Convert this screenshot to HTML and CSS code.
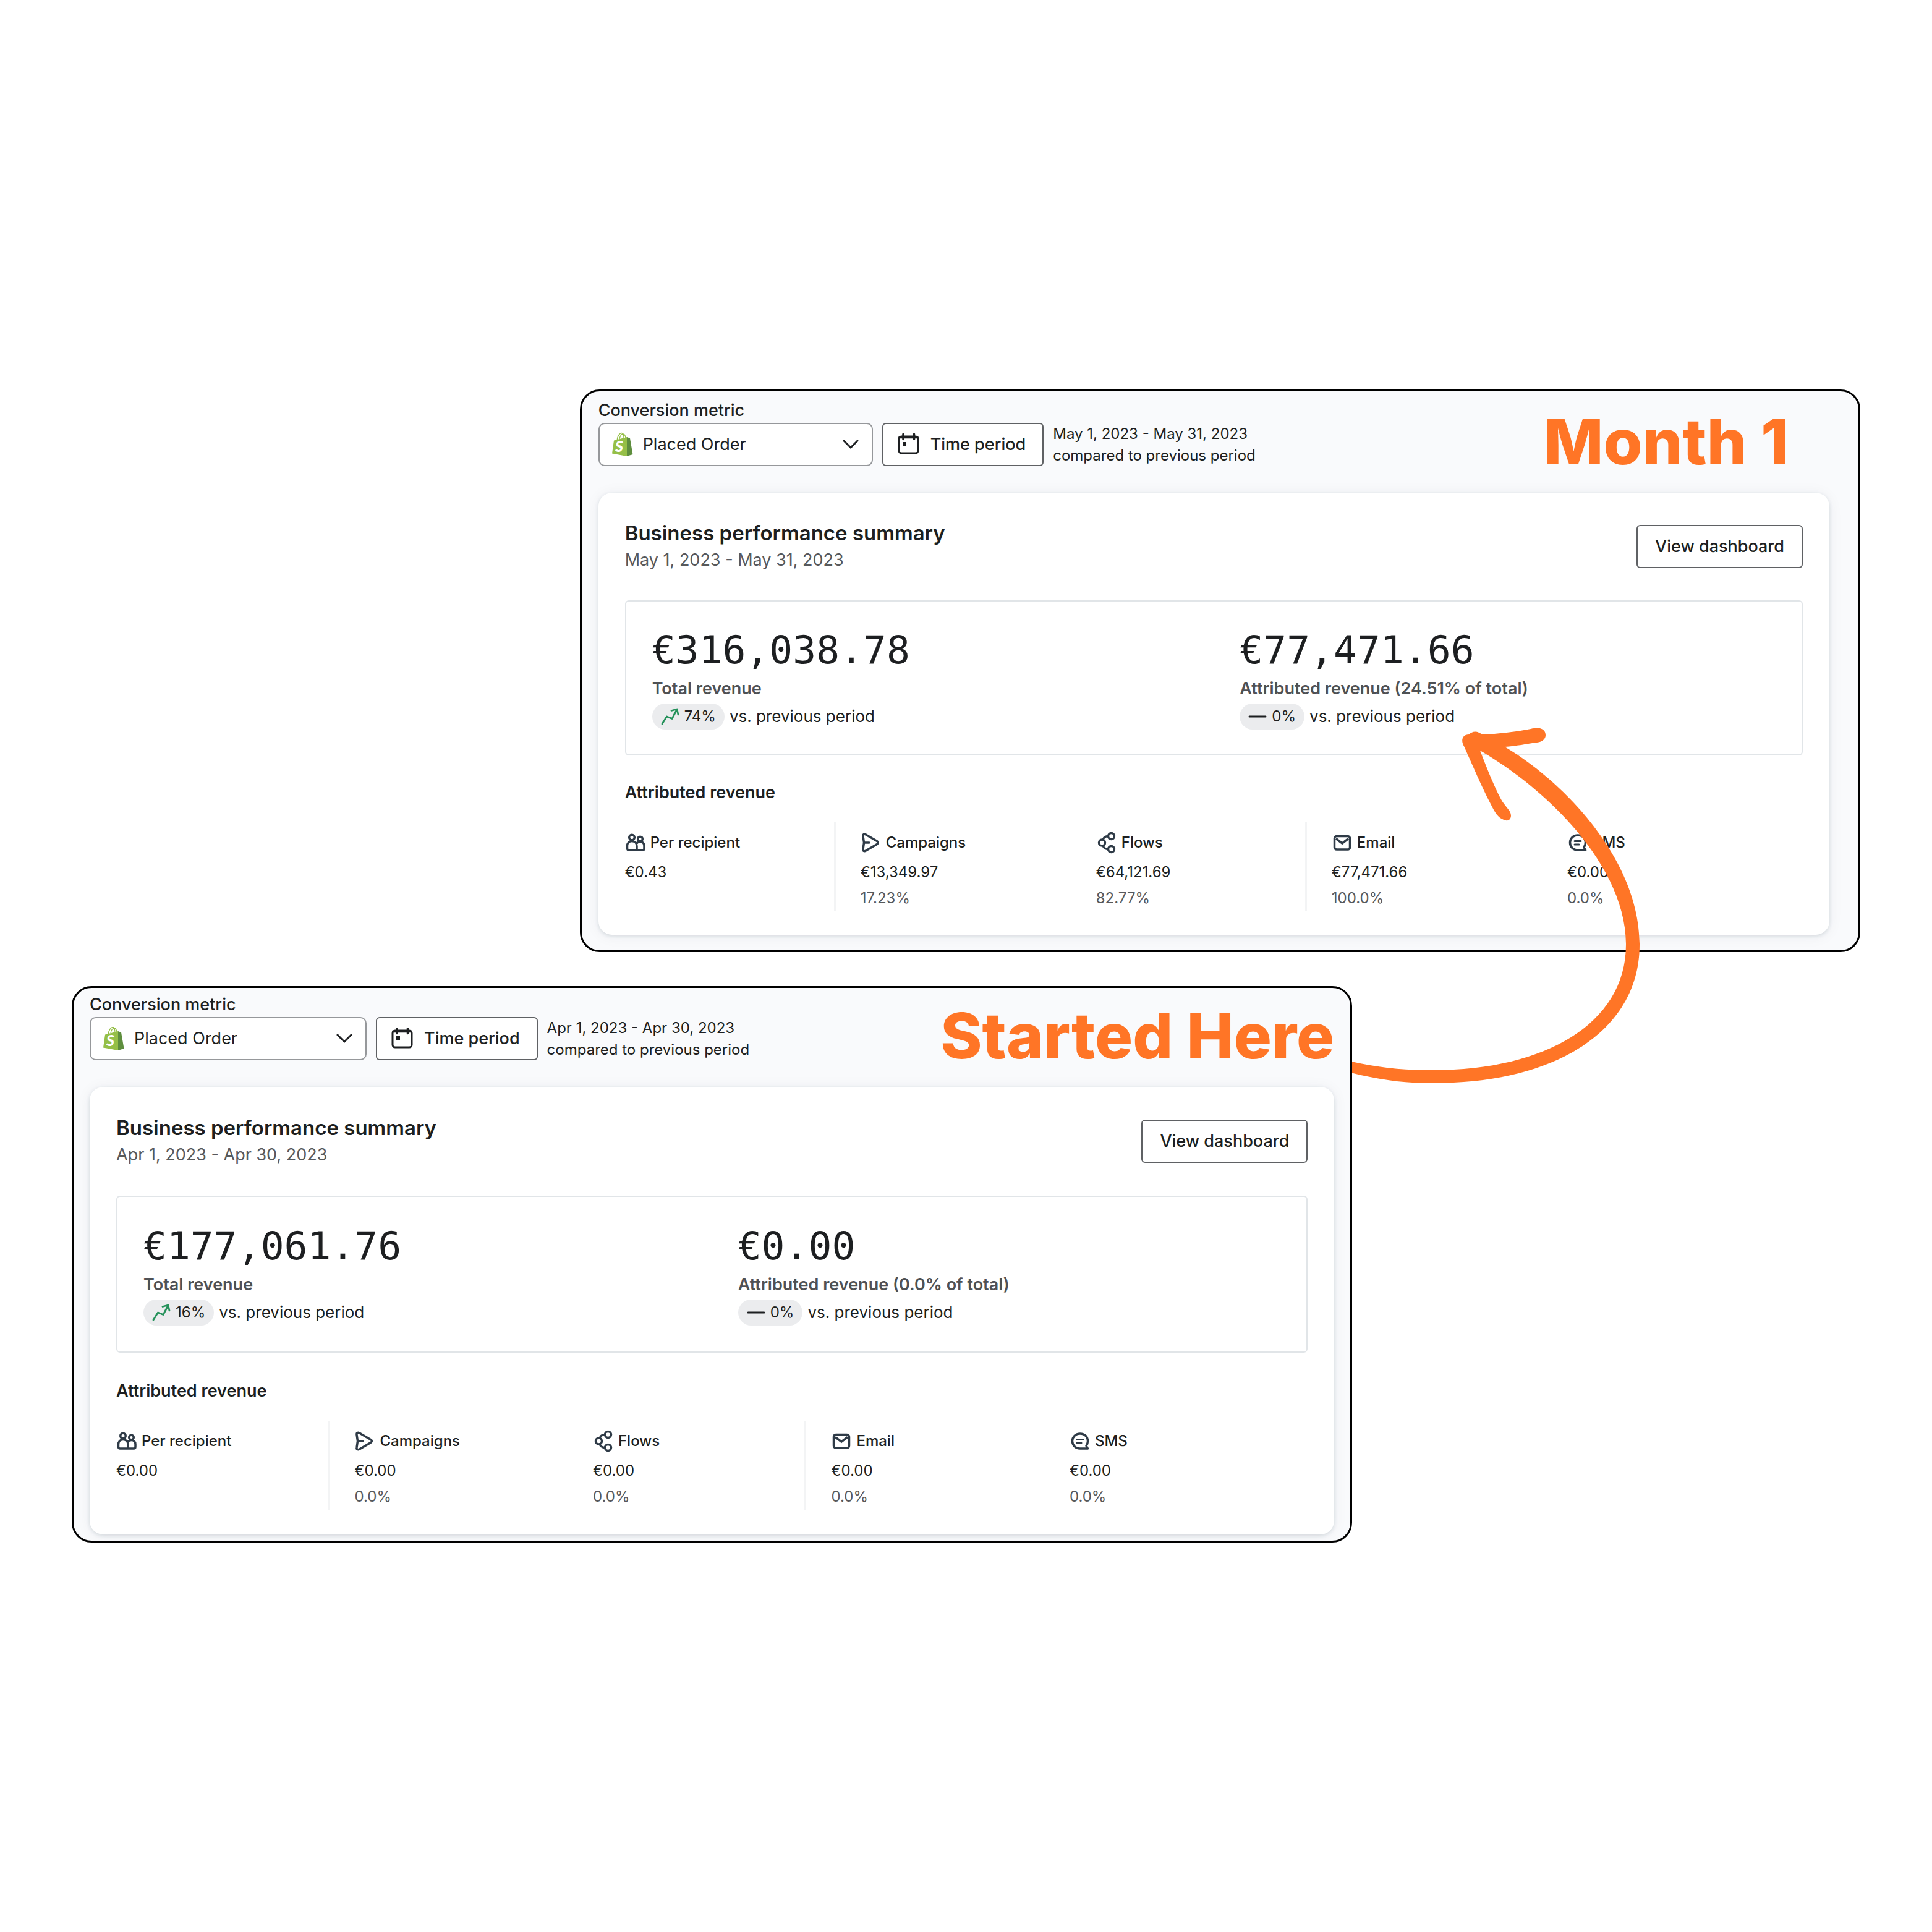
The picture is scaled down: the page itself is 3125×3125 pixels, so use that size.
FILE: index.html
```html
<!DOCTYPE html>
<html lang="en">
<head>
    <meta charset="UTF-8">
    <meta name="viewport" content="width=device-width, initial-scale=1.0">
    <title>Revenue: Started Here vs. Month 1</title>
    <link rel="stylesheet" href="styles.css">
</head>
<body>
    <!-- Shared icons -->
    <svg class="sprite" aria-hidden="true">
        <symbol id="i-bag" viewBox="0 0 34 40">
            <path d="M8 13c1-8 5-11.500 7.500-11.500 2 0 3.500 3 3.500 9M12 11c1-5 3.500-8 6-8s3.500 3 4 6.500" fill="none" stroke="#95bf47" stroke-width="1.300"/>
            <path d="M3 13.500l21-5.500V39L0 34.500z" fill="#95bf47"/>
            <path d="M24 8l5 2 4.500 26L24 39z" fill="#5e8e3e"/>
            <text x="5" y="32" font-family="Lato" font-size="25" font-weight="900" font-style="italic" fill="#fff">S</text>
        </symbol>
        <symbol id="i-calendar" viewBox="0 0 36 36">
            <rect x="2" y="5" width="31" height="27" rx="4" fill="none" stroke="currentColor" stroke-width="3"/>
            <path d="M1.500 6.500h32" stroke="currentColor" stroke-width="3.500"/>
            <path d="M9 1.500v8M26.500 1.500v8" stroke="currentColor" stroke-width="3.500" stroke-linecap="round"/>
            <rect x="8" y="14" width="6" height="6" fill="currentColor"/>
        </symbol>
        <symbol id="i-chevron" viewBox="0 0 26 16">
            <path d="M2 2l11 11L24 2" fill="none" stroke="currentColor" stroke-width="3" stroke-linecap="round"/>
        </symbol>
        <symbol id="i-trend" viewBox="0 0 30 28">
            <path d="M2 26l7.500-12 8.500 3.500L26 2.500M17 4.500l9-2.500 2 9" fill="none" stroke="#24915a" stroke-width="2.800" stroke-linecap="round" stroke-linejoin="round"/>
        </symbol>
        <symbol id="i-flat" viewBox="0 0 30 28">
            <path d="M2 14h26" stroke="currentColor" stroke-width="3" stroke-linecap="round"/>
        </symbol>
        <symbol id="i-people" viewBox="0 0 34 36">
            <g fill="none" stroke="currentColor" stroke-width="3.500" stroke-linejoin="round">
                <circle cx="11" cy="9.500" r="4.300"/>
                <circle cx="24.500" cy="12" r="3.800"/>
                <path d="M19 30H6Q3.500 30 3.500 27v-3.500c0-5 3-8 7.500-8s8 3 8 8zM19 30h9.500q2.500 0 2.500-2.500V23c0-4-2.500-6.500-6.500-6.500-2.500 0-4.500 1-6 3"/>
            </g>
        </symbol>
        <symbol id="i-send" viewBox="0 0 34 36">
            <path d="M5 14.500L4 7.500C3.500 4.500 6 3.500 8.500 5l18 10.500c2.500 1.500 2.500 3.500 0 5L8.500 31C6 32.500 3.500 31.500 4 28.500L5.500 18zM5.500 18H14" fill="none" stroke="currentColor" stroke-width="3.500" stroke-linecap="round" stroke-linejoin="round"/>
        </symbol>
        <symbol id="i-flow" viewBox="0 0 34 36">
            <g fill="none" stroke="currentColor" stroke-width="3.500">
                <circle cx="9.500" cy="18" r="5"/>
                <circle cx="24.500" cy="7.500" r="5"/>
                <circle cx="24.500" cy="28.500" r="5"/>
                <path d="M11 13Q13 7.500 19.500 7.500M11 23Q13 28.500 19.500 28.500"/>
            </g>
        </symbol>
        <symbol id="i-mail" viewBox="0 0 34 36">
            <rect x="4.500" y="7.500" width="25" height="21.500" rx="3.500" fill="none" stroke="currentColor" stroke-width="3.500"/>
            <path d="M7 11.500l10 7.500 10-7.500" fill="none" stroke="currentColor" stroke-width="3.500"/>
        </symbol>
        <symbol id="i-chat" viewBox="0 0 34 36">
            <path d="M29.500 30H17C9.500 30 4.500 24.500 4.500 18S9.500 6 17 6s12.500 5 12.500 12c0 3-1 5.500-2.500 7.500z" fill="none" stroke="currentColor" stroke-width="3.500" stroke-linejoin="round"/>
            <path d="M12 15.500h10M12 21h7" stroke="currentColor" stroke-width="3" stroke-linecap="round"/>
        </symbol>
    </svg>

    <main class="board">
        <section class="panel panel-after">
            <header class="toolbar">
                <div class="field">
                    <label for="metric-may">Conversion metric</label>
                    <div class="select">
                        <svg class="select-logo"><use href="#i-bag"/></svg>
                        <select id="metric-may"><option>Placed Order</option></select>
                        <svg class="select-arrow"><use href="#i-chevron"/></svg>
                    </div>
                </div>
                <button class="btn btn-period" type="button"><svg><use href="#i-calendar"/></svg>Time period</button>
                <p class="range">May 1, 2023 - May 31, 2023<br>compared to previous period</p>
                <h1>Month 1</h1>
            </header>
            <div class="card">
                <div class="card-head">
                    <div>
                        <h2>Business performance summary</h2>
                        <p class="dates">May 1, 2023 - May 31, 2023</p>
                    </div>
                    <button class="btn" type="button">View dashboard</button>
                </div>
                <div class="totals">
                    <div class="total">
                        <p class="amount">€316,038.78</p>
                        <p class="name">Total revenue</p>
                        <p class="change"><span class="chip"><svg><use href="#i-trend"/></svg>74%</span>vs. previous period</p>
                    </div>
                    <div class="total">
                        <p class="amount">€77,471.66</p>
                        <p class="name">Attributed revenue (24.51% of total)</p>
                        <p class="change"><span class="chip"><svg><use href="#i-flat"/></svg>0%</span>vs. previous period</p>
                    </div>
                </div>
                <h3>Attributed revenue</h3>
                <div class="channels">
                    <div class="channel divided">
                        <h4><svg><use href="#i-people"/></svg>Per recipient</h4>
                        <p>€0.43</p>
                    </div>
                    <div class="channel">
                        <h4><svg><use href="#i-send"/></svg>Campaigns</h4>
                        <p>€13,349.97</p>
                        <p class="share">17.23%</p>
                    </div>
                    <div class="channel divided">
                        <h4><svg><use href="#i-flow"/></svg>Flows</h4>
                        <p>€64,121.69</p>
                        <p class="share">82.77%</p>
                    </div>
                    <div class="channel">
                        <h4><svg><use href="#i-mail"/></svg>Email</h4>
                        <p>€77,471.66</p>
                        <p class="share">100.0%</p>
                    </div>
                    <div class="channel">
                        <h4><svg><use href="#i-chat"/></svg>SMS</h4>
                        <p>€0.00</p>
                        <p class="share">0.0%</p>
                    </div>
                </div>
            </div>
        </section>

        <section class="panel panel-before">
            <header class="toolbar">
                <div class="field">
                    <label for="metric-apr">Conversion metric</label>
                    <div class="select">
                        <svg class="select-logo"><use href="#i-bag"/></svg>
                        <select id="metric-apr"><option>Placed Order</option></select>
                        <svg class="select-arrow"><use href="#i-chevron"/></svg>
                    </div>
                </div>
                <button class="btn btn-period" type="button"><svg><use href="#i-calendar"/></svg>Time period</button>
                <p class="range">Apr 1, 2023 - Apr 30, 2023<br>compared to previous period</p>
                <h1>Started Here</h1>
            </header>
            <div class="card">
                <div class="card-head">
                    <div>
                        <h2>Business performance summary</h2>
                        <p class="dates">Apr 1, 2023 - Apr 30, 2023</p>
                    </div>
                    <button class="btn" type="button">View dashboard</button>
                </div>
                <div class="totals">
                    <div class="total">
                        <p class="amount">€177,061.76</p>
                        <p class="name">Total revenue</p>
                        <p class="change"><span class="chip"><svg><use href="#i-trend"/></svg>16%</span>vs. previous period</p>
                    </div>
                    <div class="total">
                        <p class="amount">€0.00</p>
                        <p class="name">Attributed revenue (0.0% of total)</p>
                        <p class="change"><span class="chip"><svg><use href="#i-flat"/></svg>0%</span>vs. previous period</p>
                    </div>
                </div>
                <h3>Attributed revenue</h3>
                <div class="channels">
                    <div class="channel divided">
                        <h4><svg><use href="#i-people"/></svg>Per recipient</h4>
                        <p>€0.00</p>
                    </div>
                    <div class="channel">
                        <h4><svg><use href="#i-send"/></svg>Campaigns</h4>
                        <p>€0.00</p>
                        <p class="share">0.0%</p>
                    </div>
                    <div class="channel divided">
                        <h4><svg><use href="#i-flow"/></svg>Flows</h4>
                        <p>€0.00</p>
                        <p class="share">0.0%</p>
                    </div>
                    <div class="channel">
                        <h4><svg><use href="#i-mail"/></svg>Email</h4>
                        <p>€0.00</p>
                        <p class="share">0.0%</p>
                    </div>
                    <div class="channel">
                        <h4><svg><use href="#i-chat"/></svg>SMS</h4>
                        <p>€0.00</p>
                        <p class="share">0.0%</p>
                    </div>
                </div>
            </div>
        </section>

        <!-- Hand-drawn arrow from April up to May -->
        <svg class="arrow" viewBox="0 0 3125 3125" aria-hidden="true">
            <path d="M2434 1208C2520 1258 2652 1385 2652 1528C2652 1665 2520 1752 2318 1752C2268 1752 2224 1746 2170 1731V1713C2224 1727 2268 1731 2318 1731C2500 1731 2630 1655 2630 1528C2630 1400 2500 1275 2394 1214C2404 1240 2418 1275 2428 1293C2434 1304 2444 1311 2444 1319C2444 1325 2440 1328 2436 1327C2426 1325 2420 1318 2414 1306C2396 1272 2382 1238 2368 1207C2362 1197 2366 1188 2376 1188C2382 1182 2390 1182 2397 1188C2424 1187 2450 1184 2476 1179C2490 1175 2500 1179 2500 1189C2500 1196 2494 1200 2486 1201C2470 1203 2452 1207 2434 1208Z"/>
        </svg>
    </main>
</body>
</html>
```
FILE: styles.css
```css
* {
    box-sizing: border-box;
}
body {
    margin: 0;
    background-color: #fff;
    color: #1d1f21;
    font-family: Inter, "Liberation Sans", sans-serif;
    font-size: 27px;
    line-height: 44px;
}
h1, h2, h3, h4, p {
    margin: 0;
}
.sprite {
    display: none;
}
.board {
    position: relative;
    display: flex;
    flex-direction: column;
    justify-content: center;
    gap: 55px;
    min-height: 100vh;
    padding: 0 116px;
}
.panel {
    width: 71.6%;
    border: 3px solid #000;
    border-radius: 32px;
    background-color: #f9fafc;
}
.panel-after {
    --space: 43px;
    --gap: 38px;
    align-self: flex-end;
    padding: 14px 47px 25px 27px;
}
.panel-before {
    --space: 44px;
    --gap: 40px;
    position: relative;
    z-index: 2;
    padding: 10px 26px 10px 26px;
}
.arrow {
    position: absolute;
    inset: 0;
    z-index: 1;
    width: 100%;
    height: 100%;
    fill: #ff7526;
    pointer-events: none;
}

/* Toolbar */
.toolbar {
    display: flex;
    align-items: flex-end;
    gap: 15px;
    margin-bottom: 43px;
}
.field label {
    display: block;
    margin-bottom: 3px;
    font-weight: 500;
    line-height: 34px;
}
.select {
    position: relative;
    width: 444px;
}
.panel-before .select {
    width: 448px;
}
.select select {
    display: block;
    width: 100%;
    height: 70px;
    padding: 0 70px;
    border: 2px solid #96989b;
    border-radius: 10px;
    background-color: #fff;
    color: inherit;
    font: inherit;
    appearance: none;
}
.select-logo {
    position: absolute;
    left: 22px;
    top: 15px;
    width: 34px;
    height: 40px;
}
.select-arrow {
    position: absolute;
    right: 23px;
    top: 27px;
    width: 26px;
    height: 16px;
    pointer-events: none;
}
.btn {
    display: flex;
    align-items: center;
    height: 70px;
    padding: 0 28px;
    border: 2px solid #5f6164;
    border-radius: 6px;
    background-color: #fff;
    color: inherit;
    font: inherit;
    font-weight: 500;
    white-space: nowrap;
}
.btn-period {
    gap: 17px;
    padding: 0 27px 0 23px;
}
.btn-period svg {
    width: 36px;
    height: 36px;
}
.range {
    font-size: 24px;
    line-height: 35px;
    white-space: nowrap;
}
.toolbar h1 {
    margin-left: auto;
    color: #ff7526;
    font-size: 102px;
    font-weight: 800;
    line-height: 80px;
    white-space: nowrap;
}
.panel-after h1 {
    padding-right: 66px;
}

/* Summary card */
.card {
    padding: var(--space) 43px var(--gap);
    border-radius: 22px;
    background-color: #fff;
    box-shadow: 0 2px 6px rgba(30, 50, 70, 0.14), 0 2px 24px rgba(30, 50, 70, 0.06);
}
.card-head {
    display: flex;
    align-items: center;
    justify-content: space-between;
    margin-bottom: var(--space);
}
h2 {
    font-size: 33px;
    font-weight: 600;
    line-height: 44px;
}
.dates {
    color: #57595c;
}
.totals {
    display: grid;
    grid-template-columns: 1fr 1fr;
    border: 2px solid #e1e5e8;
    border-radius: 6px;
}
.total {
    padding: var(--space) 42px var(--gap);
}
.amount {
    margin-bottom: 4px;
    font-family: "DejaVu Sans Mono", monospace;
    font-size: 63px;
    line-height: 72px;
}
.name {
    color: #4f5154;
    font-weight: 600;
}
.change {
    display: flex;
    align-items: center;
    gap: 8px;
    height: 46px;
    font-size: 26px;
}
.chip {
    display: flex;
    align-items: center;
    gap: 8px;
    height: 42px;
    padding: 0 14px;
    border-radius: 21px;
    background-color: #ebecee;
    font-size: 24px;
}
.chip svg {
    width: 30px;
    height: 28px;
}
h3 {
    margin: var(--gap) 0 26px;
    font-size: 27px;
    font-weight: 600;
}

/* Channel breakdown */
.channels {
    display: grid;
    grid-template-columns: repeat(5, 1fr);
}
.channel {
    padding-top: 12px;
    font-size: 24px;
    line-height: 42px;
}
.divided {
    margin-right: 40px;
    border-right: 3px solid #f3f4f5;
}
.channel h4 {
    display: flex;
    align-items: center;
    gap: 7px;
    margin-bottom: 6px;
    font-size: 24px;
    font-weight: 500;
}
.channel svg {
    width: 34px;
    height: 36px;
    color: #2f3b47;
}
.share {
    color: #57595c;
}
```
